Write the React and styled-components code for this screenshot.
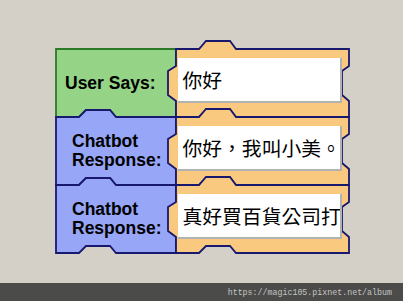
import styled, { createGlobalStyle } from "styled-components";

const GlobalStyle = createGlobalStyle`
  body {
    margin: 0;
    background: #d4d0c8;
  }
`;

const rows = [
  { label: ["User Says:"], tone: "green", indent: 9, text: "你好" },
  { label: ["Chatbot", "Response:"], tone: "blue", indent: 16, text: "你好，我叫小美。" },
  { label: ["Chatbot", "Response:"], tone: "blue", indent: 16, text: "真好買百貨公司打" },
];

const tones = {
  green: { fill: "#95d387", stroke: "#2a7a2a" },
  blue: { fill: "#97a6f6", stroke: "#18186e" },
  orange: { fill: "#f8c97f", stroke: "#18186e" },
};

// block outline: bump on top, notch cut in the bottom
const labelPath = (bump) =>
  (bump ? "M0,0 H23 L30,-7 H54 L60,0 H120" : "M0,0 H120") +
  " V68 H60 L54,61 H30 L23,68 H0 Z";

const valuePath =
  "M0,0 H23 L30,-8 H54 L60,0 H173 V17 L166,22 V46 L173,52 V68 H60 L54,61 H30 L23,68 H0 V52 L-8,46 V22 L0,17 Z";

const Shape = ({ d, tone, width }) => (
  <ShapeSvg width={width} height={68}>
    <path
      d={d}
      fill={tones[tone].fill}
      stroke={tones[tone].stroke}
      strokeWidth="1.8"
      strokeLinejoin="miter"
    />
  </ShapeSvg>
);

const App = () => {
  return (
    <Page>
      <GlobalStyle />
      <Canvas>
        <Workspace>
          {rows.map((row, i) => [
            <LabelBlock key={`l${i}`}>
              <Shape d={labelPath(i > 0)} tone={row.tone} width={120} />
              <LabelText indent={row.indent}>
                {row.label.map((line) => (
                  <span key={line}>{line}</span>
                ))}
              </LabelText>
            </LabelBlock>,
            <ValueBlock key={`v${i}`}>
              <Shape d={valuePath} tone="orange" width={173} />
              <InputBox>{row.text}</InputBox>
            </ValueBlock>,
          ])}
        </Workspace>
      </Canvas>
      <Footer>https://magic105.pixnet.net/album</Footer>
    </Page>
  );
};

const Page = styled.div`
  width: 403px;
  height: 301px;
  display: flex;
  flex-direction: column;
  background: #d4d0c8;
  overflow: hidden;
`;

const Canvas = styled.div`
  flex: 1;
  padding: 49px 0 0 56px;
`;

const Workspace = styled.div`
  display: grid;
  grid-template-columns: 120px 173px;
  grid-auto-rows: 68px;
`;

const ShapeSvg = styled.svg`
  position: absolute;
  left: 0;
  top: 0;
  overflow: visible;
`;

const LabelBlock = styled.div`
  position: relative;
`;

const ValueBlock = styled.div`
  position: relative;
`;

const LabelText = styled.div`
  position: relative;
  height: 100%;
  display: flex;
  flex-direction: column;
  justify-content: center;
  padding-left: ${(p) => p.indent}px;
  font-family: "Liberation Sans", Arial, sans-serif;
  font-weight: bold;
  font-size: 17.5px;
  line-height: 19px;
  color: #000;
`;

const InputBox = styled.div`
  position: relative;
  box-sizing: border-box;
  width: 164px;
  height: 45px;
  margin: 9px 0 0 1.5px;
  padding-left: 5px;
  display: flex;
  align-items: center;
  background: #fff;
  border-right: 2px solid #b2b2b2;
  border-bottom: 2px solid #b2b2b2;
  font-family: "Noto Sans CJK TC", "Noto Sans CJK SC", sans-serif;
  font-size: 19.8px;
  color: #000;
  white-space: nowrap;
  overflow: hidden;
`;

const Footer = styled.div`
  height: 18px;
  display: flex;
  align-items: center;
  justify-content: flex-end;
  padding-right: 11px;
  background: #4b4b49;
  color: #c4c4c4;
  font-family: "Liberation Mono", "Courier New", monospace;
  font-size: 8.3px;
`;

export default App;
